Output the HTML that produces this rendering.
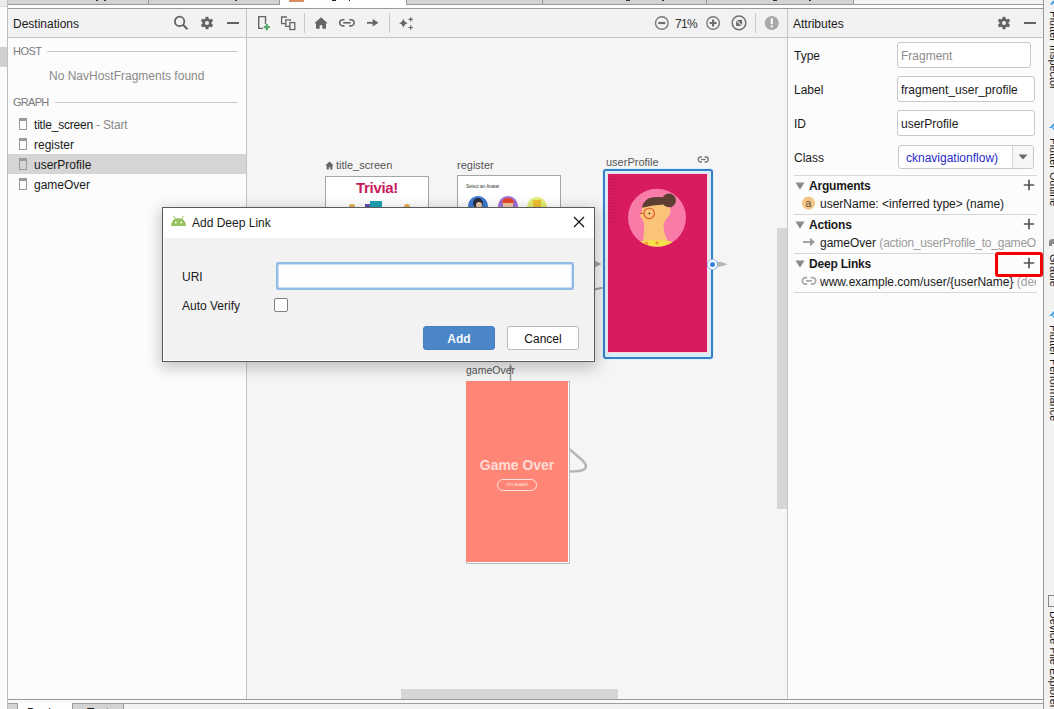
<!DOCTYPE html>
<html><head><meta charset="utf-8">
<style>
*{box-sizing:border-box;margin:0;padding:0}
html,body{width:1054px;height:709px;overflow:hidden;background:#fbfbfb;position:relative;font-family:"Liberation Sans",sans-serif;font-size:12px;color:#1a1a1a}
.a{position:absolute}
.t{position:absolute;white-space:nowrap;line-height:14px;font-size:12px}
.hl{position:absolute;height:1px}
.vl{position:absolute;width:1px}
svg{position:absolute;overflow:visible}
.vt{writing-mode:vertical-rl;font-size:10.9px;line-height:13px;white-space:nowrap;color:#1a1a1a}
</style></head><body>

<!-- ===== top tab strip ===== -->
<div class="a" style="left:0;top:0;width:8px;height:6px;background:#ebebeb"></div>
<div class="a" style="left:0;top:6px;width:7px;height:1px;background:#dcdcdc"></div>
<div class="a" style="left:8px;top:0;width:1035px;height:4px;background:#d3d3d3"></div>
<div class="hl" style="left:8px;top:4px;width:1035px;background:#9a9a9a"></div>
<div class="a" style="left:8px;top:5px;width:1035px;height:3px;background:#fdfdfd"></div>
<div class="hl" style="left:8px;top:8px;width:1035px;background:#9a9a9a"></div>
<div class="vl" style="left:148px;top:0;height:4px;background:#9a9a9a"></div>
<!-- active tab -->
<div class="a" style="left:279px;top:0;width:1px;height:5px;background:#9a9a9a"></div>
<div class="a" style="left:280px;top:0;width:126px;height:8px;background:#fdfdfd"></div>
<div class="a" style="left:406px;top:0;width:1px;height:5px;background:#9a9a9a"></div>
<div class="a" style="left:289px;top:0;width:15px;height:2px;background:#d98c60"></div>
<div class="vl" style="left:542px;top:0;height:4px;background:#9a9a9a"></div>
<div class="vl" style="left:706px;top:0;height:4px;background:#9a9a9a"></div>
<div class="a" style="left:854px;top:0;width:189px;height:4px;background:#f2f2f2"></div>
<div class="vl" style="left:853px;top:0;height:4px;background:#9a9a9a"></div>
<!-- cut text descenders in tabs -->
<div class="a" style="left:96px;top:0;width:2px;height:1px;background:#333"></div>
<div class="a" style="left:104px;top:0;width:2px;height:1px;background:#333"></div>
<div class="a" style="left:235px;top:0;width:2px;height:1px;background:#333"></div>
<div class="a" style="left:332px;top:0;width:4px;height:1px;background:#222"></div>
<div class="a" style="left:349px;top:0;width:1px;height:1px;background:#602"></div>
<div class="a" style="left:626px;top:0;width:4px;height:1px;background:#333"></div>
<div class="a" style="left:662px;top:0;width:2px;height:1px;background:#333"></div>
<div class="a" style="left:773px;top:0;width:4px;height:1px;background:#333"></div>
<div class="a" style="left:809px;top:0;width:2px;height:1px;background:#333"></div>

<!-- left gutter -->
<div class="a" style="left:0;top:47px;width:7px;height:20px;background:#d0d0d0"></div>
<div class="vl" style="left:7px;top:0;height:709px;background:#bdbdbd"></div>

<!-- ===== Destinations panel ===== -->
<div class="a" style="left:8px;top:9px;width:238px;height:28px;background:#f2f2f2"></div>
<div class="hl" style="left:8px;top:37px;width:238px;background:#c4c4c4"></div>
<div class="a" style="left:8px;top:38px;width:238px;height:661px;background:#fcfcfc"></div>
<div class="vl" style="left:246px;top:9px;height:690px;background:#c4c4c4"></div>
<div class="t" style="left:13px;top:17px">Destinations</div>

<div class="t" style="left:13px;top:44px;color:#7a7a7a;font-size:11px;letter-spacing:-0.55px">HOST</div>
<div class="hl" style="left:47px;top:51px;width:191px;background:#c8c8c8"></div>
<div class="t" style="left:49px;top:69px;color:#8a8a8a">No NavHostFragments found</div>
<div class="t" style="left:13px;top:95px;color:#7a7a7a;font-size:11px;letter-spacing:-0.7px">GRAPH</div>
<div class="hl" style="left:55px;top:102px;width:183px;background:#c8c8c8"></div>

<div class="a" style="left:8px;top:154px;width:238px;height:20px;background:#d5d5d5"></div>
<div class="t" style="left:34px;top:118px;letter-spacing:-0.2px">title_screen <span style="color:#8a8a8a">- Start</span></div>
<div class="t" style="left:34px;top:138px">register</div>
<div class="t" style="left:34px;top:158px">userProfile</div>
<div class="t" style="left:34px;top:178px">gameOver</div>


<!-- dest header icons -->
<svg style="left:172px;top:14px" width="18" height="18" viewBox="0 0 18 18"><circle cx="7.6" cy="7.4" r="4.7" fill="none" stroke="#636363" stroke-width="1.8"/><line x1="11" y1="10.8" x2="15.5" y2="15.3" stroke="#636363" stroke-width="2"/></svg>
<svg style="left:200px;top:16px" width="14" height="14" viewBox="0 0 14 14"><g fill="#636363" transform="translate(7 7)"><rect x="-1.6" y="-6.3" width="3.2" height="12.6" rx="1"/><rect x="-1.6" y="-6.3" width="3.2" height="12.6" rx="1" transform="rotate(60)"/><rect x="-1.6" y="-6.3" width="3.2" height="12.6" rx="1" transform="rotate(120)"/><circle r="4.6"/></g><circle cx="7" cy="7" r="2" fill="#f0f0f0"/></svg>
<div class="a" style="left:227px;top:22px;width:12px;height:2px;background:#636363"></div>
<!-- list phone icons -->
<div class="a" style="left:19px;top:118px;width:8px;height:12px;border:1px solid #9a9a9a;border-top-width:3px;background:#fff"></div>
<div class="a" style="left:19px;top:138px;width:8px;height:12px;border:1px solid #9a9a9a;border-top-width:3px;background:#fff"></div>
<div class="a" style="left:19px;top:158px;width:8px;height:12px;border:1px solid #9a9a9a;border-top-width:3px;background:#d5d5d5"></div>
<div class="a" style="left:19px;top:178px;width:8px;height:12px;border:1px solid #9a9a9a;border-top-width:3px;background:#fff"></div>

<!-- ===== Canvas ===== -->
<div class="a" style="left:247px;top:9px;width:540px;height:28px;background:#f2f2f2"></div>
<div class="hl" style="left:247px;top:37px;width:540px;background:#c4c4c4"></div>
<div class="a" style="left:247px;top:38px;width:540px;height:661px;background:#f5f5f5"></div>
<div class="vl" style="left:787px;top:9px;height:690px;background:#c4c4c4"></div>



<!-- canvas content -->
<div class="t" style="left:336px;top:159px;font-size:11px;line-height:13px;color:#555">title_screen</div>
<svg style="left:325px;top:161px" width="10" height="9" viewBox="0 0 10 9"><path d="M4.5 0.6 L0.3 4.6 H1.6 V8.6 H3.8 V6.2 H5.2 V8.6 H7.4 V4.6 H8.7 Z" fill="#666"/></svg>
<div class="a" style="left:325px;top:176px;width:104px;height:175px;border:1px solid #a6a6a6;background:#fff"></div>
<div class="t" style="left:325px;top:179px;width:104px;text-align:center;font-size:15px;line-height:18px;font-weight:bold;color:#c91a5b;letter-spacing:-0.3px">Trivia!</div>
<div class="a" style="left:370px;top:201px;width:12px;height:7px;background:#1ba3b3"></div>
<div class="a" style="left:365px;top:204px;width:5px;height:4px;background:#6a4cad"></div>
<div class="a" style="left:349px;top:204px;width:6px;height:4px;border-radius:3px 3px 0 0;background:#e8b048"></div>
<div class="a" style="left:404px;top:204px;width:6px;height:4px;border-radius:3px 3px 0 0;background:#e8b048"></div>

<div class="t" style="left:457px;top:159px;font-size:11px;line-height:13px;color:#555">register</div>
<div class="a" style="left:457px;top:175px;width:104px;height:175px;border:1px solid #a6a6a6;background:#fff"></div>
<div class="t" style="left:466px;top:184px;font-size:4.6px;line-height:6px;color:#333">Select an Avatar</div>
<div class="a" style="left:468px;top:196px;width:20px;height:20px;border-radius:50%;background:#3a7bd5"></div>
<div class="a" style="left:473px;top:198px;width:10px;height:10px;border-radius:50%;background:#2d2d3a"></div>
<div class="a" style="left:476px;top:202px;width:6px;height:6px;border-radius:50%;background:#e8c8a8"></div>
<div class="a" style="left:498px;top:196px;width:20px;height:20px;border-radius:50%;background:#a46ed8"></div>
<div class="a" style="left:502px;top:198px;width:12px;height:5px;border-radius:6px 6px 0 0;background:#e04a2a"></div>
<div class="a" style="left:503px;top:203px;width:10px;height:5px;background:#f0c8a0"></div>
<div class="a" style="left:527px;top:197px;width:20px;height:20px;border-radius:50%;background:#e6ef74"></div>
<div class="a" style="left:533px;top:200px;width:8px;height:8px;background:#f0c030"></div>

<!-- edges -->
<svg style="left:0;top:0" width="1054" height="709" viewBox="0 0 1054 709">
 <path d="M590 264 L598 264" stroke="#a2a2a2" stroke-width="1.6"/>
 <path d="M594.5 260.8 L601.5 264 L594.5 267.2 Z" fill="#a2a2a2"/>
 <path d="M592 290 L608 286.5" stroke="#a0a0a0" stroke-width="2"/>
 <path d="M714 261.3 Q723 262 727.5 264.2 Q723 266.6 714 267.2 Z" fill="#b4b4b4"/>
 <path d="M510.5 366 L510.5 381" stroke="#9a9a9a" stroke-width="1.6"/><path d="M508.3 369 L510.5 363.5 L512.7 369 Z" fill="#9a9a9a"/>
 <path d="M568 448 L581 459 Q589 466 584 469.5 Q581 471.5 569 471.5" fill="none" stroke="#b4b4b4" stroke-width="2.4"/>
</svg>

<div class="t" style="left:606px;top:156px;font-size:11px;line-height:13px;color:#555">userProfile</div>
<svg style="left:698px;top:156px" width="11" height="8" viewBox="0 0 11 8"><path d="M4 1 H2.8 A2.5 2.5 0 0 0 2.8 6 H4 M6.6 1 H7.8 A2.5 2.5 0 0 1 7.8 6 H6.6" fill="none" stroke="#777" stroke-width="1.3"/><line x1="3" y1="3.5" x2="7.6" y2="3.5" stroke="#777" stroke-width="1.3"/></svg>
<div class="a" style="left:603px;top:169px;width:110px;height:190px;border:2px solid #3a7ec9;border-radius:3px;background:#d6f0fb;box-shadow:0 0 0 1px rgba(200,240,255,0.6)"></div>
<div class="a" style="left:607px;top:173px;width:102px;height:181px;background:#f4dce8"></div>
<div class="a" style="left:608px;top:174px;width:99px;height:178px;background:#d81b5f"></div>
<div class="a" style="left:609px;top:176px;width:8px;height:46px;background:repeating-linear-gradient(#c01452 0 1px,transparent 1px 3px);opacity:0.6"></div>
<svg style="left:608px;top:174px" width="99" height="80" viewBox="0 0 99 80">
 <defs><clipPath id="cc"><circle cx="49" cy="43.7" r="29"/></clipPath></defs>
 <circle cx="49" cy="43.7" r="29" fill="#f97ba8"/>
 <g clip-path="url(#cc)">
  <path d="M34.4 32 L55 30 L62 33.5 Q63.5 39 60 43 Q56 47 55.5 51 Q55.5 60 61 69 L35 69 Q36 58 36.3 49.5 Q35 47.5 34.9 46.8 L34 44.5 Q32.5 44 32.3 42.5 L32 41.3 Q33.5 40 33.8 38 Z" fill="#fbc27a"/>
  <path d="M30 67.5 Q47 64.5 64 67.5 V80 H30 Z" fill="#f5e04a"/>
  <circle cx="38.5" cy="69.3" r="1.7" fill="#f29a3c"/><circle cx="49" cy="68.8" r="1.7" fill="#f29a3c"/>
 </g>
 <path d="M34 33.8 Q35.5 24.5 45 23.3 Q53 22.3 57 24 L63 26 Q65 30 63.8 33.5 Q60 31 55.5 30.6 Q45 31 34 33.8Z" fill="#5e3d32"/>
 <circle cx="61" cy="26.4" r="6.9" fill="#5e3d32"/>
 <circle cx="41.2" cy="39.4" r="5.2" fill="none" stroke="#d8552a" stroke-width="1.1"/>
 <path d="M32.2 39.4 H36" stroke="#d8552a" stroke-width="1"/>
 <circle cx="41.4" cy="39.4" r="0.85" fill="#333"/>
</svg>
<div class="a" style="left:707.5px;top:259.5px;width:9.5px;height:9.5px;border-radius:50%;background:#2f86e0;border:2px solid #fff;box-shadow:0 0 0 1px #8fb8e6"></div>

<div class="t" style="left:466px;top:364px;font-size:10.5px;line-height:13px;color:#555">gameOver</div>
<div class="a" style="left:466px;top:381px;width:104px;height:183px;border:1px solid #bdbdbd;background:#fff"></div>
<div class="a" style="left:466px;top:381px;width:102px;height:181px;background:#ff8677"></div>
<div class="t" style="left:466px;top:456px;width:102px;text-align:center;font-size:15.5px;line-height:18px;font-weight:bold;color:#ffdcd6;transform:scaleX(0.9);transform-origin:center">Game Over</div>
<div class="a" style="left:497px;top:479px;width:40px;height:12px;border:1px solid #ffe0da;border-radius:6px"></div>
<div class="t" style="left:497px;top:482px;width:40px;text-align:center;font-size:4px;line-height:6px;color:#ffe8e0">TRY AGAIN!</div>

<!-- scrollbars -->
<div class="a" style="left:777px;top:228px;width:10px;height:281px;background:#d6d6d6"></div>
<div class="a" style="left:401px;top:689px;width:217px;height:10px;background:#d6d6d6"></div>


<!-- ===== dialog ===== -->
<div class="a" style="left:162px;top:207px;width:433px;height:155px;border:1px solid #5a5a5a;background:#f2f2f2;box-shadow:0 4px 14px 2px rgba(0,0,0,0.22)"></div>
<div class="a" style="left:163px;top:208px;width:431px;height:30px;background:#fff"></div>
<div class="a" style="left:163px;top:238px;width:1px;height:123px;background:#fff"></div>
<div class="a" style="left:163px;top:360px;width:431px;height:1px;background:#fff"></div>
<svg style="left:170px;top:215px" width="18" height="12" viewBox="0 0 18 12"><path d="M1 11 Q1.5 3.5 8.5 3 Q15.5 3.5 16 11 Z" fill="#97c15d"/><path d="M3.5 1 L5.5 4 M13.5 1 L11.5 4" stroke="#97c15d" stroke-width="1"/><circle cx="5.8" cy="7.5" r="0.9" fill="#fff"/><circle cx="11.2" cy="7.5" r="0.9" fill="#fff"/></svg>
<div class="t" style="left:192px;top:216px">Add Deep Link</div>
<svg style="left:573px;top:216px" width="12" height="12" viewBox="0 0 12 12"><path d="M1 1 L11 11 M11 1 L1 11" stroke="#111" stroke-width="1.2"/></svg>
<div class="t" style="left:182px;top:270px">URI</div>
<div class="t" style="left:182px;top:299px">Auto Verify</div>
<div class="a" style="left:276px;top:262px;width:298px;height:28px;border:2px solid #92bce8;border-radius:2px;background:#fdfeff;box-shadow:inset 0 0 0 0.7px #b8d4f0"></div>
<div class="a" style="left:274px;top:298px;width:14px;height:14px;border:1px solid #808080;border-radius:2px;background:#fff"></div>
<div class="a" style="left:423px;top:326px;width:72px;height:24px;border:1px solid #4680c2;border-radius:3px;background:#4a86c8"></div>
<div class="t" style="left:423px;top:332px;width:72px;text-align:center;color:#f4f8fc;font-weight:bold">Add</div>
<div class="a" style="left:507px;top:326px;width:72px;height:24px;border:1px solid #bcbcbc;border-radius:3px;background:#fff"></div>
<div class="t" style="left:507px;top:332px;width:72px;text-align:center;color:#111">Cancel</div>

<!-- canvas toolbar -->
<svg style="left:250px;top:10px" width="80" height="26" viewBox="0 0 80 26">
 <path d="M15.5 14 V6.6 H8.7 V18.4 H13" fill="none" stroke="#666" stroke-width="1.4"/>
 <path d="M16.8 14 V20.2 M13.7 17.1 H19.9" stroke="#59a869" stroke-width="2.2"/>
 <path d="M36.2 13.6 H31.6 V7 H36.2 V8" fill="none" stroke="#666" stroke-width="1.3"/>
 <path d="M40.3 16.4 H35.8 V9.9 H40.3 V11" fill="none" stroke="#666" stroke-width="1.3"/>
 <rect x="39.8" y="12.6" width="5" height="6.9" fill="none" stroke="#666" stroke-width="1.3"/>
 <path d="M71 7.2 L64.3 13.2 H66 V18.8 H69.7 V15.3 H72.3 V18.8 H76 V13.2 H77.7 Z" fill="#666"/>
</svg>
<div class="vl" style="left:304px;top:13px;height:20px;background:#c9c9c9"></div>
<svg style="left:330px;top:10px" width="90" height="26" viewBox="0 0 90 26">
 <path d="M14.5 9.7 H12.8 A3.1 3.1 0 0 0 12.8 15.9 H14.5 M19.2 9.7 H21 A3.1 3.1 0 0 1 21 15.9 H19.2" fill="none" stroke="#666" stroke-width="1.6"/>
 <line x1="13.2" y1="12.8" x2="20.6" y2="12.8" stroke="#666" stroke-width="1.6"/>
 <line x1="37" y1="12.8" x2="44" y2="12.8" stroke="#666" stroke-width="1.8"/>
 <path d="M42.6 9 L48.5 12.8 L42.6 16.6 Z" fill="#666"/>
 <path d="M73.4 8.6 Q74.2 12.4 77.8 13.2 Q74.2 14 73.4 17.8 Q72.6 14 69 13.2 Q72.6 12.4 73.4 8.6Z" fill="#666"/>
 <path d="M80.7 7.2 V11.6 M78.5 9.4 H82.9 M80.7 15.3 V19.7 M78.5 17.5 H82.9" stroke="#666" stroke-width="1.2"/>
</svg>
<div class="vl" style="left:389px;top:13px;height:20px;background:#c9c9c9"></div>

<svg style="left:645px;top:10px" width="145" height="26" viewBox="0 0 145 26">
 <circle cx="16.8" cy="13" r="6.3" fill="none" stroke="#7a7a7a" stroke-width="1.4"/>
 <line x1="13.3" y1="13" x2="20.3" y2="13" stroke="#6e6e6e" stroke-width="2.2"/>
 <circle cx="68.1" cy="13" r="6.3" fill="none" stroke="#7a7a7a" stroke-width="1.4"/>
 <path d="M64.6 13 H71.6 M68.1 9.5 V16.5" stroke="#6e6e6e" stroke-width="2.2"/>
 <circle cx="94" cy="12.9" r="6.8" fill="none" stroke="#707070" stroke-width="1.5"/>
 <rect x="91.1" y="9.9" width="6" height="6" fill="#6a6a6a"/>
 <path d="M90.6 9.4 L97.6 16.4" stroke="#f0f0f0" stroke-width="1.1"/>
 <circle cx="126.8" cy="13" r="7" fill="#a8a8a8"/>
 <rect x="125.8" y="8.4" width="2" height="5.8" fill="#fff"/>
 <rect x="125.8" y="15.4" width="2" height="2" fill="#fff"/>
</svg>
<div class="t" style="left:675px;top:17px;color:#333;letter-spacing:-0.7px">71%</div>
<div class="vl" style="left:755px;top:13px;height:20px;background:#c9c9c9"></div>

<!-- ===== Attributes ===== -->
<div class="a" style="left:788px;top:9px;width:255px;height:28px;background:#f2f2f2"></div>
<div class="hl" style="left:788px;top:37px;width:255px;background:#c4c4c4"></div>
<div class="a" style="left:788px;top:38px;width:255px;height:661px;background:#fcfcfc"></div>
<div class="vl" style="left:1043px;top:0;height:709px;background:#9a9a9a"></div>
<div class="t" style="left:793px;top:17px">Attributes</div>


<!-- attr header icons -->
<svg style="left:997px;top:16px" width="14" height="14" viewBox="0 0 14 14"><g fill="#636363" transform="translate(7 7)"><rect x="-1.6" y="-6.3" width="3.2" height="12.6" rx="1"/><rect x="-1.6" y="-6.3" width="3.2" height="12.6" rx="1" transform="rotate(60)"/><rect x="-1.6" y="-6.3" width="3.2" height="12.6" rx="1" transform="rotate(120)"/><circle r="4.6"/></g><circle cx="7" cy="7" r="2" fill="#f0f0f0"/></svg>
<div class="a" style="left:1024px;top:22px;width:12px;height:2px;background:#636363"></div>

<div class="t" style="left:794px;top:49px">Type</div>
<div class="t" style="left:794px;top:83px">Label</div>
<div class="t" style="left:794px;top:117px">ID</div>
<div class="t" style="left:794px;top:151px">Class</div>

<div class="a" style="left:897px;top:42px;width:134px;height:26px;border:1px solid #c9c9c9;border-radius:3px;background:#fff"></div>
<div class="t" style="left:901px;top:49px;color:#8c8c8c">Fragment</div>
<div class="a" style="left:897px;top:76px;width:138px;height:26px;border:1px solid #c9c9c9;border-radius:3px;background:#fff"></div>
<div class="t" style="left:901px;top:83px">fragment_user_profile</div>
<div class="a" style="left:897px;top:110px;width:138px;height:26px;border:1px solid #c9c9c9;border-radius:3px;background:#fff"></div>
<div class="t" style="left:901px;top:117px">userProfile</div>
<div class="a" style="left:898px;top:145px;width:136px;height:24px;border:1px solid #c9c9c9;border-radius:3px;background:#fff"></div>
<div class="vl" style="left:1012px;top:146px;height:22px;background:#d8d8d8"></div>
<div class="a" style="left:1013px;top:146px;width:20px;height:22px;background:#f6f6f6;border-radius:0 2px 2px 0"></div>
<svg style="left:1017px;top:153px" width="12" height="8" viewBox="0 0 12 8"><path d="M1.5 1.5 H10.5 L6 6.5 Z" fill="#6a6a6a"/></svg>
<div class="t" style="left:906px;top:151px;color:#2929c8">cknavigationflow)</div>

<div class="hl" style="left:794px;top:175px;width:243px;background:#d6d6d6"></div>
<div class="hl" style="left:794px;top:214px;width:243px;background:#d6d6d6"></div>
<div class="hl" style="left:794px;top:253px;width:243px;background:#d6d6d6"></div>
<div class="hl" style="left:794px;top:292px;width:243px;background:#d6d6d6"></div>

<svg style="left:794px;top:180px" width="12" height="12" viewBox="0 0 12 12"><path d="M1.5 2.5 H10.5 L6 9.8 Z" fill="#8a8a8a"/></svg>
<svg style="left:794px;top:219px" width="12" height="12" viewBox="0 0 12 12"><path d="M1.5 2.5 H10.5 L6 9.8 Z" fill="#8a8a8a"/></svg>
<svg style="left:794px;top:258px" width="12" height="12" viewBox="0 0 12 12"><path d="M1.5 2.5 H10.5 L6 9.8 Z" fill="#8a8a8a"/></svg>
<div class="t" style="left:809px;top:179px;font-weight:bold;letter-spacing:-0.2px">Arguments</div>
<div class="t" style="left:809px;top:218px;font-weight:bold;letter-spacing:-0.2px">Actions</div>
<div class="t" style="left:809px;top:257px;font-weight:bold;letter-spacing:-0.2px">Deep Links</div>

<svg style="left:1022px;top:178px" width="14" height="14" viewBox="0 0 14 14"><path d="M7 1.8 V12.2 M1.8 7 H12.2" stroke="#555" stroke-width="1.7"/></svg>
<svg style="left:1022px;top:217px" width="14" height="14" viewBox="0 0 14 14"><path d="M7 1.8 V12.2 M1.8 7 H12.2" stroke="#555" stroke-width="1.7"/></svg>
<svg style="left:1022px;top:256px" width="14" height="14" viewBox="0 0 14 14"><path d="M7 1.8 V12.2 M1.8 7 H12.2" stroke="#555" stroke-width="1.7"/></svg>

<svg style="left:801px;top:196px" width="15" height="15" viewBox="0 0 15 15"><circle cx="7.5" cy="7.2" r="6.6" fill="#f3c68a"/><text x="7.5" y="10.6" font-family="Liberation Sans" font-size="10.5" fill="#5a4a30" text-anchor="middle">a</text></svg>
<div class="t" style="left:820px;top:197px">userName: &lt;inferred type&gt; (name)</div>

<svg style="left:801px;top:236px" width="16" height="12" viewBox="0 0 16 12"><path d="M2 6 H11" stroke="#9c9c9c" stroke-width="1.9"/><path d="M9 1.8 L14 6 L9 10.2 Z" fill="#9c9c9c"/></svg>
<div class="a" style="left:820px;top:236px;width:216px;height:14px;overflow:hidden"><div class="t" style="left:0;top:0">gameOver <span style="color:#9a9a9a;letter-spacing:-0.22px">(action_userProfile_to_gameOver)</span></div></div>

<svg style="left:801px;top:275px" width="16" height="12" viewBox="0 0 16 12"><path d="M6.2 2.6 H4.6 A3.3 3.3 0 0 0 4.6 9.2 H6.2 M9.8 2.6 H11.4 A3.3 3.3 0 0 1 11.4 9.2 H9.8" fill="none" stroke="#a8a8a8" stroke-width="1.7"/><line x1="5" y1="5.9" x2="11" y2="5.9" stroke="#a8a8a8" stroke-width="1.7"/></svg>
<div class="a" style="left:820px;top:275px;width:216px;height:14px;overflow:hidden"><div class="t" style="left:0;top:0">www.example.com/user/{userName} <span style="color:#a0a0a0">(deep)</span></div></div>

<div class="a" style="left:995px;top:252px;width:48px;height:25px;border:3px solid #f50000;border-radius:3px"></div>


<!-- right strip -->
<div class="a" style="left:1044px;top:0;width:10px;height:709px;background:#f2f2f2"></div>
<div class="a vt" style="left:1047px;top:11px">Flutter Inspector</div>
<div class="a vt" style="left:1047px;top:138px">Flutter Outline</div>
<div class="a vt" style="left:1047px;top:254px">Gradle</div>
<div class="a vt" style="left:1047px;top:325px">Flutter Performance</div>
<div class="a vt" style="left:1047px;top:611px">Device File Explorer</div>
<svg style="left:1046px;top:0" width="10" height="8" viewBox="0 0 10 8"><path d="M4 4 L8 0 H11 L6 5 Z" fill="#4aa3df"/></svg>
<svg style="left:1046px;top:123px" width="10" height="10" viewBox="0 0 10 10"><path d="M3 5 L8 0 H11 L6 5 Z M6 5 L8.5 7.5 H11 L8 4.5" fill="#4aa3df"/></svg>
<svg style="left:1046px;top:311px" width="10" height="10" viewBox="0 0 10 10"><path d="M3 5 L8 0 H11 L6 5 Z M6 5 L8.5 7.5 H11 L8 4.5" fill="#4aa3df"/></svg>
<svg style="left:1046px;top:238px" width="10" height="9" viewBox="0 0 10 9"><path d="M3 8 V4 Q3 1 7 1 H11 V8 H9 V6 H6 V8 Z" fill="#8c8c8c"/></svg>
<div class="a" style="left:1048px;top:595px;width:9px;height:12px;border:1.3px solid #888;border-right:none"></div>


<!-- bottom -->
<div class="hl" style="left:8px;top:699px;width:1035px;background:#9a9a9a"></div>
<div class="a" style="left:8px;top:700px;width:1035px;height:3px;background:#f8f8f8"></div>
<div class="hl" style="left:8px;top:703px;width:1035px;background:#a0a0a0"></div>
<div class="a" style="left:8px;top:704px;width:1035px;height:5px;background:#f2f2f2"></div>
<div class="a" style="left:8px;top:704px;width:10px;height:5px;background:#d3d3d3;border-right:1px solid #999"></div>
<div class="a" style="left:18px;top:703px;width:54px;height:6px;background:#fdfdfd"></div>
<div class="a" style="left:72px;top:704px;width:52px;height:5px;background:#d3d3d3;border-left:1px solid #999;border-right:1px solid #999"></div>
<div class="t" style="left:27px;top:706px">Design</div>
<div class="t" style="left:87px;top:706px">Text</div>

</body></html>
